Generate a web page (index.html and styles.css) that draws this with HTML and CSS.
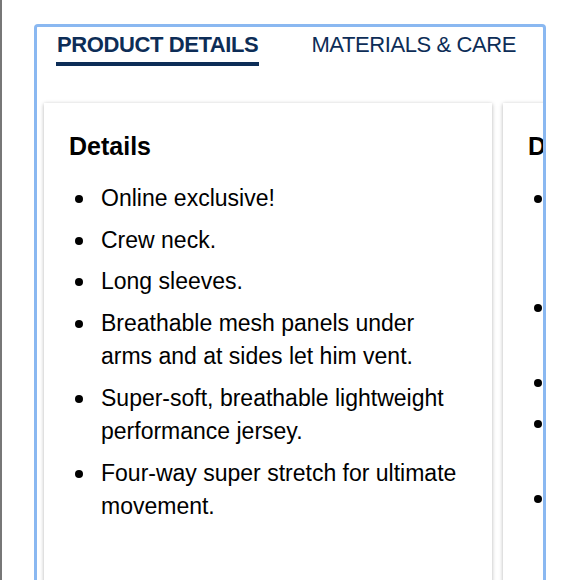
FILE: index.html
```html
<!doctype html>
<html lang="en">
<head>
    <meta charset="UTF-8">
    <title>Product Details</title>
    <link rel="stylesheet" href="styles.css">
</head>
<body>
<div class="page">
    <div class="panel">
        <div class="tabs">
            <span class="tab current">PRODUCT DETAILS</span>
            <span class="tab">MATERIALS &amp; CARE</span>
        </div>
        <div class="cards">
            <div class="card">
                <h3>Details</h3>
                <ul>
                    <li>Online exclusive!</li>
                    <li>Crew neck.</li>
                    <li>Long sleeves.</li>
                    <li>Breathable mesh panels under arms and at sides let him vent.</li>
                    <li>Super-soft, breathable lightweight performance jersey.</li>
                    <li>Four-way super stretch for ultimate movement.</li>
                </ul>
            </div>
            <div class="card">
                <h3>Design</h3>
                <ul>
                    <li>Moisture-wicking fabric<br>pulls sweat away to keep<br>him dry and comfortable.</li>
                    <li>Flatlock seams help<br>prevent chafing.</li>
                    <li>Tagless label.</li>
                    <li>Logo at chest and<br>back of neck.</li>
                    <li>Imported.</li>
                </ul>
            </div>
        </div>
    </div>
</div>
</body>
</html>
```

FILE: styles.css
```css
* {
    margin: 0;
    padding: 0;
    box-sizing: border-box;
}

html, body {
    height: 100%;
    overflow: hidden;
}

body {
    background: #fff;
    border-left: 2px solid #777;
    font-family: "Liberation Sans", Arial, sans-serif;
    color: #000;
}

.page {
    padding: 24px 34px 0 32px;
}

.panel {
    height: 620px;
    border: 3px solid #8ab8f1;
    border-bottom: 0;
    border-radius: 4px 4px 0 0;
    overflow: hidden;
}

.tabs {
    display: flex;
    gap: 51px;
    padding-left: 19px;
}

.tab {
    padding: 5px 1px;
    font-size: 22px;
    line-height: 25px;
    letter-spacing: -0.4px;
    color: #0d2d57;
    border-bottom: 4px solid transparent;
    white-space: nowrap;
}

.tab.current {
    font-weight: bold;
    border-bottom-color: #0d2d57;
}

.cards {
    display: flex;
    gap: 11px;
    margin-top: 37px;
    padding: 0 7px;
}

.card {
    flex: 0 0 448px;
    min-height: 560px;
    padding: 28px 25px;
    background: #fff;
    box-shadow: 0 1px 4px rgba(0, 0, 0, .3);
}

.card h3 {
    margin-bottom: 21px;
    font-size: 25px;
    line-height: 30px;
    color: #000;
}

.card ul {
    list-style: none;
    padding-left: 32px;
    font-size: 23px;
    line-height: 33.5px;
    color: #000;
}

.card li {
    position: relative;
    margin-bottom: 8px;
}

.card li:before {
    content: "";
    position: absolute;
    left: -26px;
    top: 13px;
    width: 8px;
    height: 8px;
    border-radius: 50%;
    background: #000;
}
```
